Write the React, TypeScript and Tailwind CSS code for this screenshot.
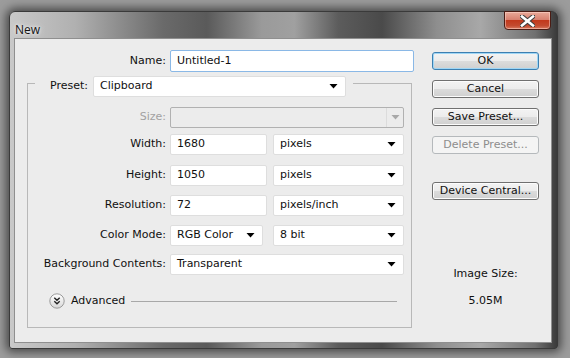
import React from "react";

function Arrow({ gray }: { gray?: boolean }) {
  return (
    <svg width="9" height="5" viewBox="0 0 9 5" className="shrink-0">
      <polygon points="0.5,0 8.5,0 4.5,4.5" fill={gray ? "#a8a8a8" : "#000"} />
    </svg>
  );
}

function TextBox({ value, width, focus }: { value: string; width: string; focus?: boolean }) {
  return (
    <div
      className={`${width} h-[21px] bg-white border rounded-[2px] flex items-center pl-[6px] ${
        focus ? "border-[#8ab8e6]" : "border-[#dedede]"
      }`}
    >
      {value}
    </div>
  );
}

function Select({ value, width }: { value: string; width: string }) {
  return (
    <div className={`${width} h-[21px] bg-white border border-[#dedede] rounded-[2px] flex items-center pl-[6px] pr-[7px] justify-between`}>
      <span>{value}</span>
      <Arrow />
    </div>
  );
}

function Row({ label, children, top, gray }: { label: string; children: React.ReactNode; top: string; gray?: boolean }) {
  return (
    <div className={`flex items-center h-[21px] ${top}`}>
      <div className={`w-[138px] text-right ${gray ? "text-[#a2a2a2]" : ""}`}>{label}</div>
      <div className="ml-[4px] flex gap-[6px]">{children}</div>
    </div>
  );
}

function Btn({ label, top, primary, disabled }: { label: string; top: string; primary?: boolean; disabled?: boolean }) {
  const look = disabled
    ? "border-[#b5b9bc] text-[#8d8d8d] bg-[#f4f4f4]"
    : primary
    ? "border-[#3c7fb1] shadow-[inset_0_0_0_1px_#9fd6f5] bg-[linear-gradient(#f3f3f3_0%,#ececec_50%,#dcdcdc_51%,#d0d0d0_100%)]"
    : "border-[#707070] shadow-[inset_0_0_0_1px_#fcfcfc] bg-[linear-gradient(#f3f3f3_0%,#ececec_50%,#dcdcdc_51%,#d0d0d0_100%)]";
  return (
    <div className={`w-[107px] h-[18px] border rounded-[3px] flex items-center justify-center ${look} ${top}`}>
      {label}
    </div>
  );
}

export default function App() {
  return (
    <div className="w-[570px] h-[358px] overflow-hidden bg-[#9c9c9c] pl-[9px] pt-[11px] font-['DejaVu_Sans',sans-serif] text-[11px] text-[#101010]">
      <div className="w-[549px] h-[338px] rounded-t-[6px] rounded-b-[3px] border border-[#3a3a3a] shadow-[0_0_10px_3px_rgba(0,0,0,0.55)] bg-[linear-gradient(90deg,#c9c9c9_0%,#b0b0b0_12%,#6a6a6a_28%,#5a5a5a_36%,#9a9a9a_46%,#a0a0a0_52%,#5c5c5c_60%,#4a4a4a_68%,#8e8e8e_78%,#a8a8a8_86%,#707070_96%,#3a3a3a_100%)] flex flex-col">
        <div className="h-[26px] flex justify-between shrink-0">
          <div className="pl-[5px] pt-[9px] text-[12px] font-['Open_Sans',sans-serif] text-[#141414] [text-shadow:0_0_6px_#e8e8e8,0_0_3px_#ffffff]">
            New
          </div>
          <div className="mr-[6px] -mt-px w-[47px] h-[19px] rounded-b-[4px] border border-[#4b1c14] bg-[linear-gradient(#e9a999_0%,#d88170_45%,#c2391c_50%,#c34a2f_80%,#d97a60_100%)] flex items-center justify-center shadow-[inset_0_0_0_1px_rgba(255,220,210,0.5)]">
            <svg width="15" height="12" viewBox="0 0 15 12">
              <path d="M2 1.5 L13 10.5 M13 1.5 L2 10.5" stroke="#3c3c3c" strokeWidth="4.6" strokeLinecap="square" />
              <path d="M2 1.5 L13 10.5 M13 1.5 L2 10.5" stroke="#ffffff" strokeWidth="2.6" strokeLinecap="square" />
            </svg>
          </div>
        </div>
        <div className="flex-1 pl-[4px] pr-[5px] pb-[5px] flex">
          <div className="flex-1 bg-[#ececec] border border-[#8f8f8f] flex">
            <div className="w-[400px] flex flex-col">
              <div className="flex items-center h-[22px] mt-[11px]">
                <div className="w-[151px] text-right">Name:</div>
                <div className="ml-[4px]">
                  <TextBox value="Untitled-1" width="w-[244px] h-[22px]" focus />
                </div>
              </div>
              <div className="ml-[12px] w-[385px] mt-[4px] flex flex-col">
                <div className="flex h-[21px]">
                  <div className="w-[8px] mt-[7px] border-t border-l border-[#b8b8b8]" />
                  <div className="ml-[15px] flex items-center">Preset:</div>
                  <div className="ml-[5px]">
                    <Select value="Clipboard" width="w-[253px]" />
                  </div>
                  <div className="flex-1 ml-[7px] mt-[7px] border-t border-r border-[#b8b8b8]" />
                </div>
                <div className="h-[231px] border-l border-r border-b border-[#b8b8b8] flex flex-col">
                  <Row label="Size:" top="mt-[10px]" gray>
                    <div className="w-[234px] h-[21px] border border-[#b1b1b1] rounded-[2px] flex justify-end">
                      <div className="w-[17px] border-l border-[#dcdcdc] flex items-center justify-center">
                        <Arrow gray />
                      </div>
                    </div>
                  </Row>
                  <Row label="Width:" top="mt-[6px]">
                    <TextBox value="1680" width="w-[97px]" />
                    <Select value="pixels" width="w-[131px]" />
                  </Row>
                  <Row label="Height:" top="mt-[10px]">
                    <TextBox value="1050" width="w-[97px]" />
                    <Select value="pixels" width="w-[131px]" />
                  </Row>
                  <Row label="Resolution:" top="mt-[9px]">
                    <TextBox value="72" width="w-[97px]" />
                    <Select value="pixels/inch" width="w-[131px]" />
                  </Row>
                  <Row label="Color Mode:" top="mt-[9px]">
                    <Select value="RGB Color" width="w-[93px]" />
                    <div className="ml-[4px]">
                      <Select value="8 bit" width="w-[131px]" />
                    </div>
                  </Row>
                  <Row label="Background Contents:" top="mt-[8px]">
                    <Select value="Transparent" width="w-[234px]" />
                  </Row>
                  <div className="flex items-center mt-[18px] ml-[21px]">
                    <svg width="16" height="16" viewBox="0 0 16 16">
                      <defs>
                        <linearGradient id="adv" x1="0" y1="0" x2="0" y2="1">
                          <stop offset="0" stopColor="#ffffff" />
                          <stop offset="1" stopColor="#d8d8d8" />
                        </linearGradient>
                      </defs>
                      <circle cx="8" cy="8" r="7.2" fill="url(#adv)" stroke="#9a9a9a" />
                      <path d="M5.3 4.8 L8 7.2 L10.7 4.8 M5.3 8.3 L8 10.7 L10.7 8.3" stroke="#222" strokeWidth="1.4" fill="none" />
                    </svg>
                    <span className="ml-[6px]">Advanced</span>
                    <div className="ml-[6px] w-[266px] border-t border-[#a8a8a8]" />
                  </div>
                </div>
              </div>
            </div>
            <div className="ml-[17px] w-[107px] flex flex-col items-center">
              <Btn label="OK" top="mt-[13px]" primary />
              <Btn label="Cancel" top="mt-[10px]" />
              <Btn label="Save Preset..." top="mt-[10px]" />
              <Btn label="Delete Preset..." top="mt-[10px]" disabled />
              <Btn label="Device Central..." top="mt-[28px]" />
              <div className="mt-[66px]">Image Size:</div>
              <div className="mt-[10px]">5.05M</div>
            </div>
          </div>
        </div>
      </div>
    </div>
  );
}
